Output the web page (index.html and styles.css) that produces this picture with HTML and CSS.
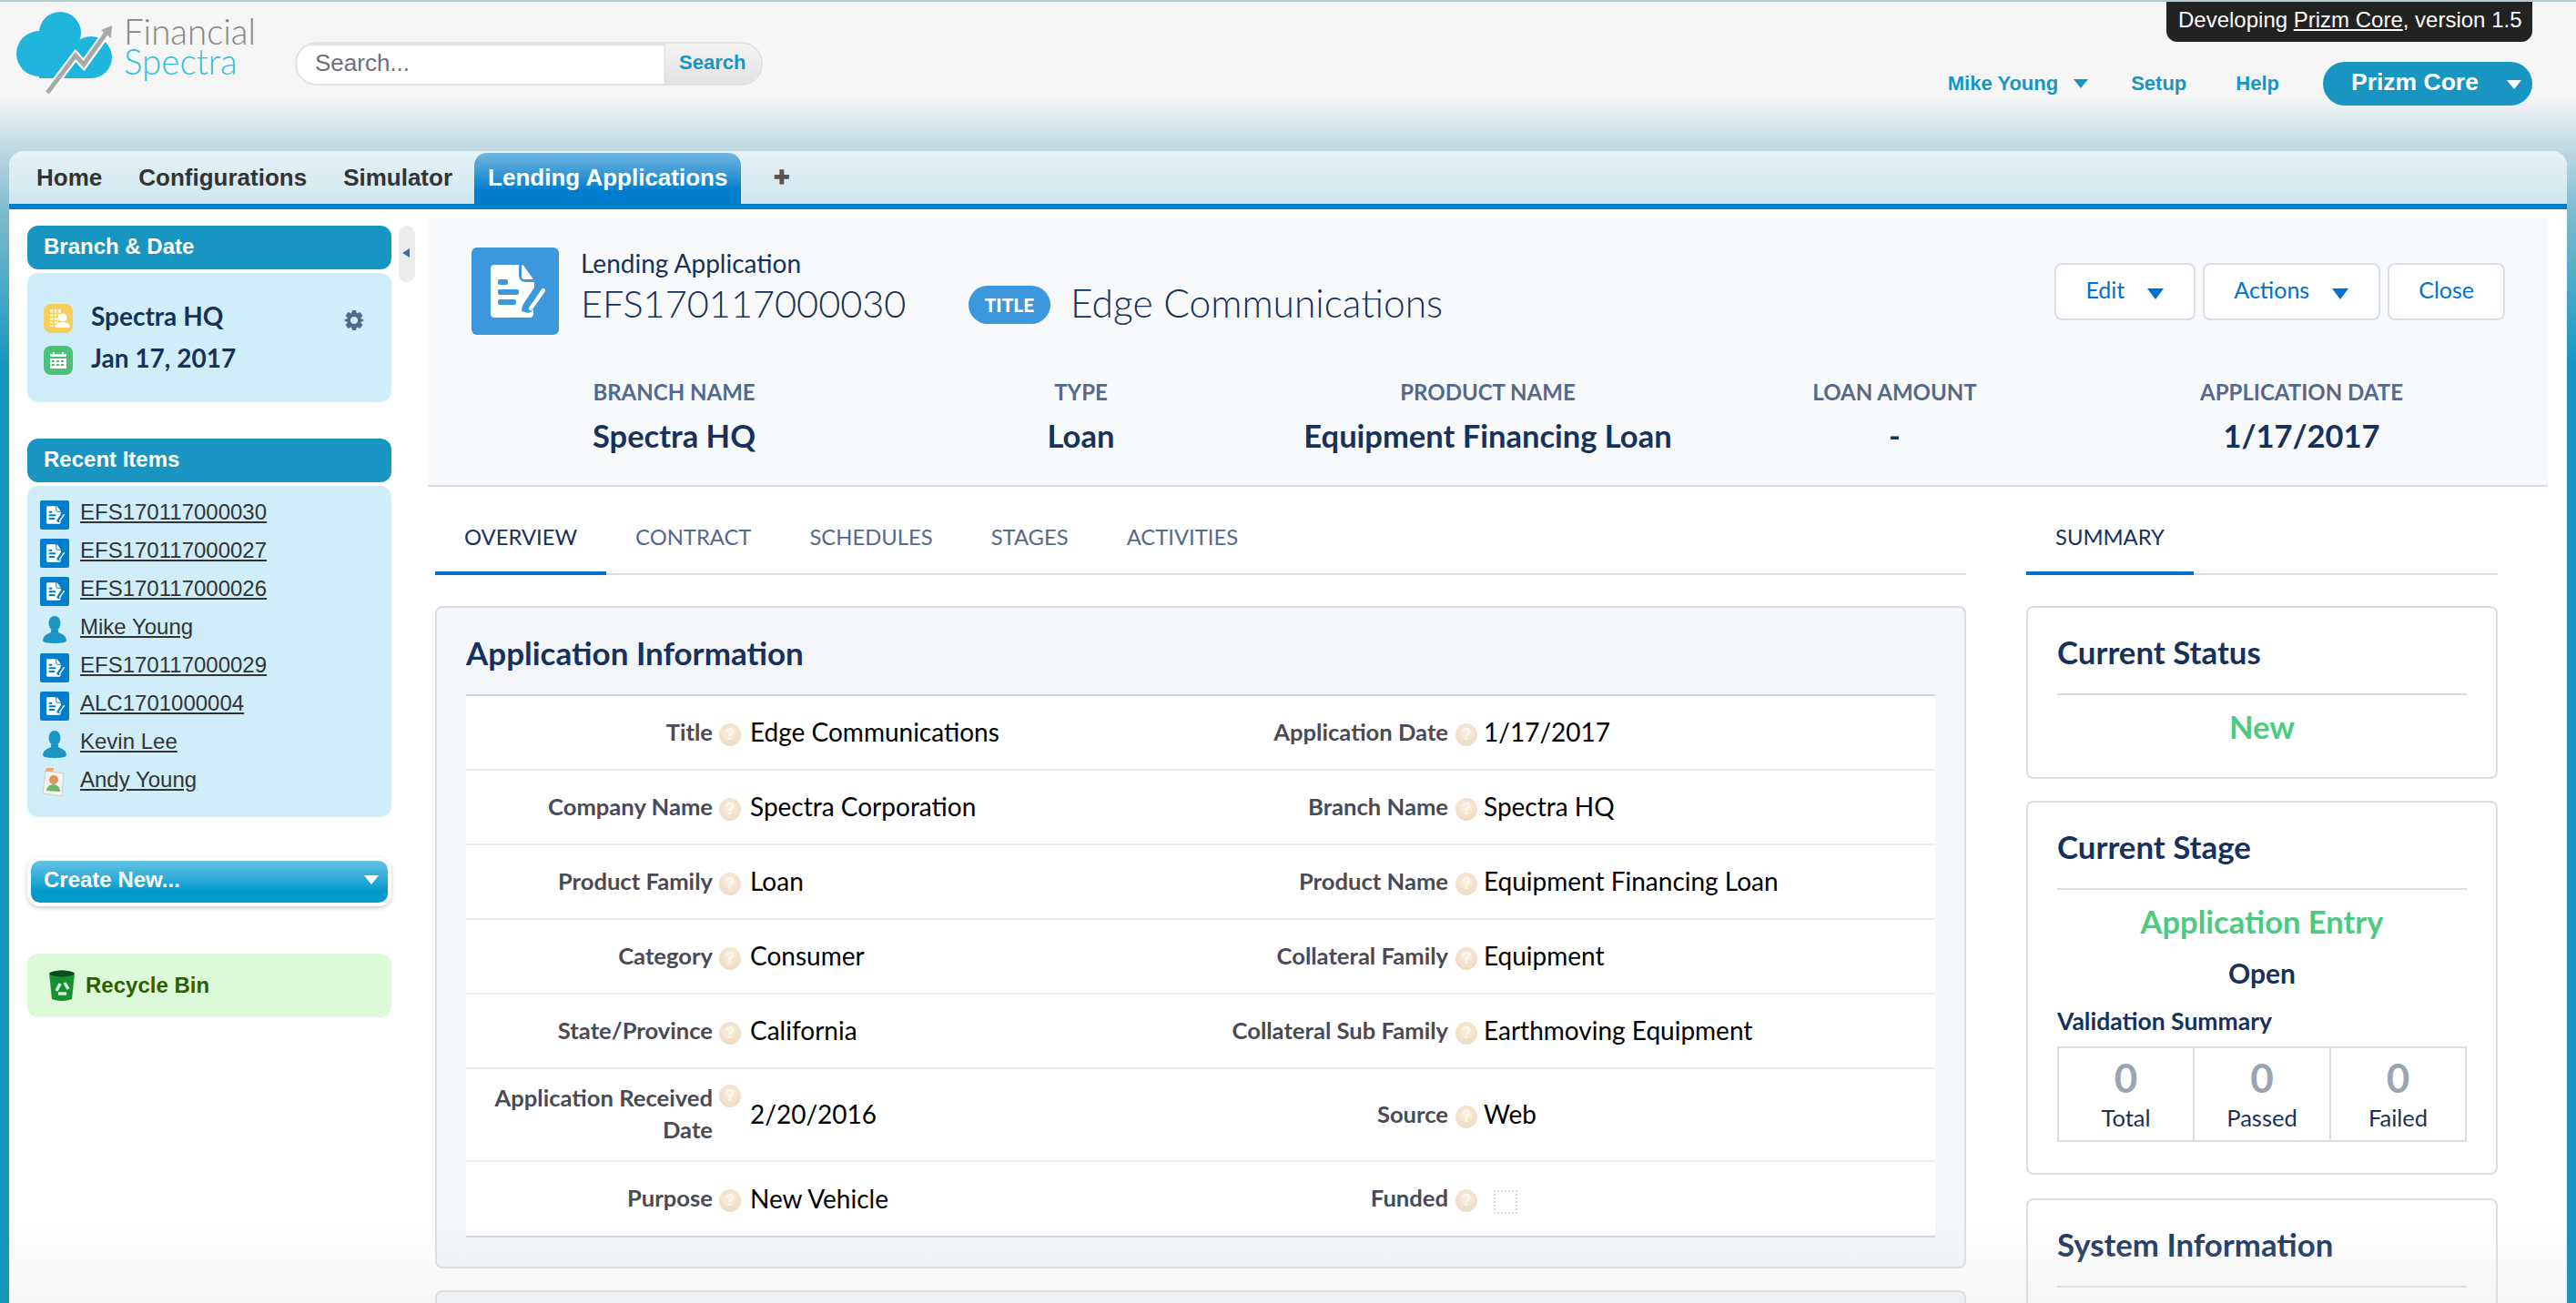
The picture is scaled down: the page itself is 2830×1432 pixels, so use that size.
FILE: index.html
```html
<!DOCTYPE html>
<html lang="en">
<head>
    <meta charset="UTF-8">
    <title>Lending Application EFS170117000030</title>
    <link rel="stylesheet" href="styles.css">
</head>
<body>
    <svg class="sprites" width="0" height="0">
        <symbol id="doc-icon" viewBox="0 0 96 96">
            <path fill="#fff" d="M25 19H52V30Q52 38 60 38H69V44L57 62Q55 66 55 70L62 72Q66 71 68 68V73Q68 77 64 77H25Q21 77 21 73V23Q21 19 25 19Z"/>
            <path fill="#fff" d="M55 19Q57 19 58 21L68 35H58Q55 35 55 32Z"/>
            <path stroke="#fff" stroke-width="4.5" stroke-linecap="round" d="M79 47L65 67"/>
            <rect class="doc-line" x="29" y="35" width="11" height="6" rx="2"/>
            <rect class="doc-line" x="29" y="46" width="23" height="6" rx="2"/>
            <rect class="doc-line" x="29" y="57" width="20" height="6" rx="2"/>
        </symbol>
        <symbol id="person-icon" viewBox="0 0 32 32">
            <ellipse cx="16" cy="9" rx="6.5" ry="8" fill="#1b96c4"/>
            <path fill="#1b96c4" d="M12 16H20V19Q29 22 29 28Q29 31 16 31Q3 31 3 28Q3 22 12 19Z"/>
        </symbol>
    </svg>

    <div class="header">
        <div class="logo">
            <svg class="logo-mark" width="125" height="106" viewBox="0 0 125 106">
                <circle cx="43" cy="59" r="25" fill="#1fb5dc"/>
                <circle cx="66" cy="36" r="23" fill="#1fb5dc"/>
                <circle cx="100" cy="63" r="23" fill="#1fb5dc"/>
                <rect x="43" y="50" width="57" height="36" fill="#1fb5dc"/>
                <path d="M52 102L83 61L92 71L121 31" fill="none" stroke="#fff" stroke-width="9"/>
                <path d="M52 102L83 61L92 71L119 33" fill="none" stroke="#aaa" stroke-width="5"/>
                <path d="M111 33L123 28L122 42Z" fill="#aaa"/>
            </svg>
            <div class="logo-text">
                <div class="logo-top">Financial</div>
                <div class="logo-bottom">Spectra</div>
            </div>
        </div>
        <div class="search">
            <div class="search-input">Search...</div>
            <div class="search-btn">Search</div>
        </div>
        <div class="top-links">
            <a class="top-link">Mike Young<i class="tri tri-teal"></i></a>
            <a class="top-link">Setup</a>
            <a class="top-link">Help</a>
            <div class="app-switch">Prizm Core<i class="tri tri-white"></i></div>
        </div>
        <div class="dev-note">Developing <u>Prizm Core</u>, version 1.5</div>
    </div>

    <div class="app">
        <div class="tab-bar">
            <a class="tab">Home</a>
            <a class="tab">Configurations</a>
            <a class="tab">Simulator</a>
            <a class="tab tab-active">Lending Applications</a>
            <a class="tab tab-plus">&#10010;</a>
        </div>

        <div class="workspace">
            <div class="sidebar">
                <div class="side-head">Branch &amp; Date</div>
                <div class="side-body branch-body">
                    <div class="branch-row">
                        <span class="branch-icon bg-yellow">
                            <svg width="32" height="32" viewBox="0 0 32 32">
                                <path fill="#fff" opacity=".85" d="M7 6H19V14Q15 17 15 25H7Z"/>
                                <path stroke="#f4cf5c" stroke-width="1.500" d="M7 10.500H19M7 14.500H16M7 18.500H15M7 22.500H15M11 6V25M15 6V14"/>
                                <circle cx="21" cy="15" r="4.5" fill="#fff"/>
                                <path fill="#fff" d="M13 26Q13 20 21 20Q29 20 29 26Z"/>
                            </svg>
                        </span>
                        <span class="branch-text">Spectra HQ</span>
                        <svg class="gear" width="24" height="24" viewBox="0 0 24 24">
                            <path fill="#54698d" d="M10 1H14L15 4.500L18.500 3L21.500 7L19 9.500L23 12L19 14.500L21.500 17L18.500 21L15 19.500L14 23H10L9 19.500L5.500 21L2.500 17L5 14.500L1 12L5 9.500L2.500 7L5.500 3L9 4.500Z"/>
                            <circle cx="12" cy="12" r="4" fill="#d0eef9"/>
                        </svg>
                    </div>
                    <div class="branch-row">
                        <span class="branch-icon bg-green">
                            <svg width="32" height="32" viewBox="0 0 32 32">
                                <path fill="#fff" d="M7 9H10V7H12V9H20V7H22V9H25V12H7ZM7 14H25V25H7Z"/>
                                <path stroke="#4bc076" stroke-width="2" stroke-dasharray="3 2" d="M9 17H24M9 21H24"/>
                            </svg>
                        </span>
                        <span class="branch-text">Jan 17, 2017</span>
                    </div>
                </div>

                <div class="side-head recent-head">Recent Items</div>
                <div class="side-body recent-body">
                    <a class="recent-row"><span class="doc-small"><svg width="32" height="32"><use href="#doc-icon"/></svg></span>EFS170117000030</a>
                    <a class="recent-row"><span class="doc-small"><svg width="32" height="32"><use href="#doc-icon"/></svg></span>EFS170117000027</a>
                    <a class="recent-row"><span class="doc-small"><svg width="32" height="32"><use href="#doc-icon"/></svg></span>EFS170117000026</a>
                    <a class="recent-row"><span class="doc-plain"><svg width="32" height="32"><use href="#person-icon"/></svg></span>Mike Young</a>
                    <a class="recent-row"><span class="doc-small"><svg width="32" height="32"><use href="#doc-icon"/></svg></span>EFS170117000029</a>
                    <a class="recent-row"><span class="doc-small"><svg width="32" height="32"><use href="#doc-icon"/></svg></span>ALC1701000004</a>
                    <a class="recent-row"><span class="doc-plain"><svg width="32" height="32"><use href="#person-icon"/></svg></span>Kevin Lee</a>
                    <a class="recent-row"><span class="doc-plain">
                        <svg width="32" height="32" viewBox="0 0 32 32">
                            <path fill="#f2f2ee" stroke="#cfcfc8" d="M6 3L26 6L24 31L3 28Z"/>
                            <path fill="#f2a65a" d="M7 0H15L14 4H6Z"/>
                            <circle cx="15" cy="13" r="5" fill="#e0955a"/>
                            <path fill="#6fb36a" d="M7 25Q8 18 15 18Q22 19 22 26Z"/>
                        </svg>
                    </span>Andy Young</a>
                </div>

                <div class="create-new">Create New...<i class="tri tri-white"></i></div>

                <div class="recycle">
                    <svg width="32" height="36" viewBox="0 0 32 36">
                        <path fill="#17912f" d="M2 4Q16 -1 30 4L27 33Q16 37 5 33Z"/>
                        <ellipse cx="16" cy="5" rx="13" ry="3.500" fill="#0b4d18"/>
                        <path fill="none" stroke="#d8ecd8" stroke-width="3.500" d="M10 24L14 16M19 15L23 22M21 27H12"/>
                    </svg>
                    <span>Recycle Bin</span>
                </div>
            </div>

            <div class="side-handle"><i class="handle-tri"></i></div>

            <div class="content">
                <div class="record-head">
                    <div class="record-top">
                        <span class="record-icon"><svg width="96" height="96"><use href="#doc-icon"/></svg></span>
                        <div class="record-name">
                            <div class="record-type">Lending Application</div>
                            <div class="record-id">EFS170117000030</div>
                        </div>
                        <span class="title-badge">TITLE</span>
                        <span class="record-title">Edge Communications</span>
                        <div class="record-actions">
                            <a class="action-btn">Edit<i class="tri tri-blue"></i></a>
                            <a class="action-btn">Actions<i class="tri tri-blue"></i></a>
                            <a class="action-btn">Close</a>
                        </div>
                    </div>
                    <div class="highlights">
                        <div><div class="hl-label">BRANCH NAME</div><div class="hl-value">Spectra HQ</div></div>
                        <div><div class="hl-label">TYPE</div><div class="hl-value">Loan</div></div>
                        <div><div class="hl-label">PRODUCT NAME</div><div class="hl-value">Equipment Financing Loan</div></div>
                        <div><div class="hl-label">LOAN AMOUNT</div><div class="hl-value">-</div></div>
                        <div><div class="hl-label">APPLICATION DATE</div><div class="hl-value">1/17/2017</div></div>
                    </div>
                </div>

                <div class="columns">
                    <div class="col-main">
                        <div class="sub-tabs">
                            <a class="sub-tab sub-tab-active">OVERVIEW</a>
                            <a class="sub-tab">CONTRACT</a>
                            <a class="sub-tab">SCHEDULES</a>
                            <a class="sub-tab">STAGES</a>
                            <a class="sub-tab">ACTIVITIES</a>
                        </div>

                        <div class="info-card">
                            <h2 class="card-title">Application Information</h2>
                            <div class="info-table">
                                <div class="info-row">
                                    <div class="field"><span class="f-label">Title</span><span class="help">?</span><span class="f-value">Edge Communications</span></div>
                                    <div class="field field-r"><span class="f-label">Application Date</span><span class="help">?</span><span class="f-value">1/17/2017</span></div>
                                </div>
                                <div class="info-row">
                                    <div class="field"><span class="f-label">Company Name</span><span class="help">?</span><span class="f-value">Spectra Corporation</span></div>
                                    <div class="field field-r"><span class="f-label">Branch Name</span><span class="help">?</span><span class="f-value">Spectra HQ</span></div>
                                </div>
                                <div class="info-row">
                                    <div class="field"><span class="f-label">Product Family</span><span class="help">?</span><span class="f-value">Loan</span></div>
                                    <div class="field field-r"><span class="f-label">Product Name</span><span class="help">?</span><span class="f-value">Equipment Financing Loan</span></div>
                                </div>
                                <div class="info-row">
                                    <div class="field"><span class="f-label">Category</span><span class="help">?</span><span class="f-value">Consumer</span></div>
                                    <div class="field field-r"><span class="f-label">Collateral Family</span><span class="help">?</span><span class="f-value">Equipment</span></div>
                                </div>
                                <div class="info-row">
                                    <div class="field"><span class="f-label">State/Province</span><span class="help">?</span><span class="f-value">California</span></div>
                                    <div class="field field-r"><span class="f-label">Collateral Sub Family</span><span class="help">?</span><span class="f-value">Earthmoving Equipment</span></div>
                                </div>
                                <div class="info-row info-row-tall">
                                    <div class="field"><span class="f-label">Application Received Date</span><span class="help help-top">?</span><span class="f-value">2/20/2016</span></div>
                                    <div class="field field-r"><span class="f-label">Source</span><span class="help">?</span><span class="f-value">Web</span></div>
                                </div>
                                <div class="info-row info-row-last">
                                    <div class="field"><span class="f-label">Purpose</span><span class="help">?</span><span class="f-value">New Vehicle</span></div>
                                    <div class="field field-r"><span class="f-label">Funded</span><span class="help">?</span><span class="check"></span></div>
                                </div>
                            </div>
                        </div>
                        <div class="info-card next-card"></div>
                    </div>

                    <div class="col-side">
                        <div class="sub-tabs">
                            <a class="sub-tab sub-tab-active">SUMMARY</a>
                        </div>

                        <div class="sum-card status-card">
                            <h3 class="sum-title">Current Status</h3>
                            <div class="sum-state">New</div>
                        </div>
                        <div class="sum-card stage-card">
                            <h3 class="sum-title">Current Stage</h3>
                            <div class="sum-state">Application Entry</div>
                            <div class="stage-open">Open</div>
                            <div class="valid-title">Validation Summary</div>
                            <div class="valid-grid">
                                <div class="valid-cell"><div class="valid-num">0</div><div class="valid-label">Total</div></div>
                                <div class="valid-cell"><div class="valid-num">0</div><div class="valid-label">Passed</div></div>
                                <div class="valid-cell"><div class="valid-num">0</div><div class="valid-label">Failed</div></div>
                            </div>
                        </div>
                        <div class="sum-card system-card">
                            <h3 class="sum-title">System Information</h3>
                        </div>
                    </div>
                </div>
            </div>
        </div>
    </div>
    <div class="bottom-fade"></div>
</body>
</html>
```

FILE: styles.css
```css
/* Page */
* {
    box-sizing: border-box;
}

html, body {
    height: 100%;
    overflow: hidden;
}

body {
    margin: 0;
    position: relative;
    font-family: "Liberation Sans", Arial, sans-serif;
    border-top: 2px solid #b7c9d1;
    background: linear-gradient(#f6f6f6 0, #f6f6f6 105px, #bcd8e2 166px, #7fbcd0 230px, #1896c1 400px);
}

.sprites {
    position: absolute;
}

.doc-line {
    fill: currentColor;
}

/* Triangles */
.tri {
    display: inline-block;
    width: 0;
    height: 0;
    border-left: 8px solid transparent;
    border-right: 8px solid transparent;
    border-top: 10px solid #fff;
}

.tri-teal {
    border-top-color: #1896c1;
    margin-left: 17px;
    vertical-align: 2px;
}

.tri-white {
    border-top-color: #fff;
}

.tri-blue {
    border-left-width: 9px;
    border-right-width: 9px;
    border-top: 12px solid #0070d2;
    margin: 0 1px 0 25px;
    vertical-align: -1px;
}

/* Header */
.header {
    height: 164px;
    display: flex;
    align-items: flex-start;
    position: relative;
}

.logo {
    display: flex;
    margin-top: -2px;
    width: 324px;
}

.logo-mark {
    flex: none;
    margin-right: 11px;
}

.logo-text {
    font-family: Lato, sans-serif;
    font-weight: 300;
    font-size: 38.500px;
    line-height: 33px;
    padding-top: 18px;
}

.logo-top {
    color: #858585;
}

.logo-bottom {
    color: #2fc0e2;
}

.search {
    display: flex;
    width: 514px;
    height: 48px;
    margin-top: 44px;
    border: 2px solid #e2e2e2;
    border-radius: 24px;
    overflow: hidden;
    background: #fff;
}

.search-input {
    flex: 1;
    padding-left: 20px;
    font-size: 26px;
    line-height: 42px;
    color: #6f6f75;
    box-shadow: inset 0 2px 2px #ddd;
}

.search-btn {
    width: 106px;
    padding-left: 15px;
    font-size: 22px;
    font-weight: bold;
    line-height: 42px;
    color: #1896c1;
    background: linear-gradient(#f4f4f4, #e2e2e2);
    border-left: 1px solid #ddd;
}

.top-links {
    margin: 66px 48px 0 auto;
    display: flex;
    align-items: center;
    height: 48px;
}

.top-link {
    font-size: 22px;
    font-weight: bold;
    color: #1896c1;
    margin-right: 54px;
}

.top-link:nth-child(2) {
    margin-left: -7px;
}

.app-switch {
    width: 230px;
    height: 48px;
    margin-left: -6px;
    padding-left: 31px;
    border-radius: 24px;
    background: #1896c1;
    color: #fff;
    font-size: 26.500px;
    font-weight: bold;
    line-height: 44px;
}

.app-switch .tri {
    margin-left: 31px;
    vertical-align: 1px;
}

.dev-note {
    position: absolute;
    top: 0;
    right: 48px;
    width: 402px;
    height: 44px;
    padding-left: 13px;
    background: #222;
    color: #fff;
    font-size: 24px;
    line-height: 40px;
    white-space: nowrap;
    border-radius: 0 0 12px 12px;
}

/* App shell */
.app {
    margin: 0 10px;
    height: calc(100vh - 166px);
    overflow: hidden;
    background: #fff;
    border-radius: 16px 16px 0 0;
}

.tab-bar {
    height: 64px;
    display: flex;
    padding: 2px 0 0 21px;
    border-bottom: 6px solid #007dcd;
    border-radius: 16px 16px 0 0;
    background: linear-gradient(#e6f2f6, #cfe7ef);
}

.tab {
    padding: 0 9px;
    margin-right: 22px;
    font-size: 26px;
    font-weight: bold;
    line-height: 54px;
    color: #333;
}

.tab-active {
    width: 293px;
    margin: 0 0 0 -7px;
    padding: 0 15px;
    color: #fff;
    white-space: nowrap;
    border-radius: 14px 14px 0 0;
    background: linear-gradient(#74b7e0, #007dcd 75%);
}

.tab-plus {
    margin: 0 0 0 27px;
    font-size: 21px;
    color: #555;
}

.workspace {
    display: flex;
}

/* Sidebar */
.sidebar {
    width: 400px;
    flex: none;
    margin: 18px 0 0 20px;
}

.side-head {
    height: 48px;
    padding-left: 18px;
    border-radius: 12px;
    background: #1896c1;
    color: #fff;
    font-size: 24px;
    font-weight: bold;
    line-height: 46px;
}

.side-body {
    margin-top: 4px;
    border-radius: 12px;
    background: #d0eef9;
}

.branch-body {
    height: 142px;
    padding: 34px 0 0 18px;
}

.branch-row {
    display: flex;
    align-items: center;
    height: 32px;
    margin-bottom: 14px;
}

.branch-icon {
    width: 32px;
    height: 32px;
    border-radius: 8px;
}

.bg-yellow {
    background: #f4cf5c;
}

.bg-green {
    background: #4bc076;
}

.branch-text {
    margin-left: 20px;
    font-family: Lato, sans-serif;
    font-size: 28px;
    font-weight: 700;
    color: #16325c;
    margin-top: -7px;
}

.gear {
    margin-left: auto;
    margin-right: 29px;
    margin-top: 3px;
}

.recent-head {
    margin-top: 40px;
}

.recent-body {
    height: 364px;
    padding: 16px 0 0 14px;
}

.recent-row {
    display: flex;
    align-items: flex-start;
    height: 42px;
    font-size: 24px;
    line-height: 26px;
    color: #333;
    text-decoration: underline;
}

.doc-small, .doc-plain {
    flex: none;
    width: 32px;
    height: 32px;
    margin-right: 12px;
    text-decoration: none;
}

.doc-small {
    background: #007dcd;
    color: #007dcd;
    border-radius: 2px;
}

.create-new {
    display: flex;
    align-items: center;
    justify-content: space-between;
    height: 46px;
    margin: 48px 4px 0;
    padding: 0 10px 4px 14px;
    border-radius: 10px;
    background: linear-gradient(#66c3e4, #0299cb 75%);
    color: #fff;
    font-size: 24px;
    font-weight: bold;
    box-shadow: 0 0 0 4px #fff, 0 2px 5px 4px #ccc;
}

.recycle {
    display: flex;
    align-items: center;
    height: 70px;
    margin-top: 56px;
    padding-left: 22px;
    border-radius: 12px;
    background: #dcf9da;
    color: #2b6000;
    font-size: 24px;
    font-weight: bold;
}

.recycle span {
    margin-left: 10px;
}

.side-handle {
    flex: none;
    display: flex;
    align-items: center;
    width: 18px;
    height: 62px;
    margin: 18px 14px 0 8px;
    border-radius: 9px;
    background: #ececec;
    padding-left: 4px;
}

.handle-tri {
    border-top: 5px solid transparent;
    border-bottom: 5px solid transparent;
    border-right: 8px solid #3a6cb0;
    margin-bottom: 2px;
}

/* Record header */
.content {
    width: 2329px;
    margin-top: 10px;
}

.record-head {
    height: 295px;
    padding: 32px 47px 0 48px;
    background: #f7f9fb;
    border-bottom: 2px solid #d8dde6;
}

.record-top {
    display: flex;
    align-items: center;
    height: 96px;
    color: #16325c;
}

.record-icon {
    width: 96px;
    height: 96px;
    border-radius: 6px;
    background: #3c97dd;
    color: #3c97dd;
}

.record-name {
    margin: -8px 0 0 24px;
    width: 426px;
}

.record-type {
    font-family: Lato, sans-serif;
    font-size: 28px;
    line-height: 34px;
}

.record-id {
    font-family: Lato, sans-serif;
    font-weight: 300;
    font-size: 41.500px;
    line-height: 54px;
    white-space: nowrap;
}

.title-badge {
    margin-top: 30px;
    width: 90px;
    height: 42px;
    border-radius: 21px;
    background: #3c97dd;
    color: #fff;
    font-family: Lato, sans-serif;
    font-size: 21px;
    font-weight: 900;
    line-height: 42px;
    text-align: center;
}

.record-title {
    margin: 24px 0 0 22px;
    font-family: Lato, sans-serif;
    font-weight: 300;
    font-size: 42.500px;
}

.record-actions {
    margin-left: auto;
    display: flex;
    gap: 8px;
}

.action-btn {
    height: 63px;
    padding: 0 32px;
    border: 2px solid #d8dde6;
    border-radius: 8px;
    background: #fff;
    color: #0070d2;
    font-family: Lato, sans-serif;
    font-size: 25px;
    line-height: 55px;
}

.highlights {
    display: grid;
    grid-template-columns: repeat(5, 447px);
    margin: 48px 0 0 -1px;
    text-align: center;
}

.hl-label {
    font-family: Lato, sans-serif;
    font-size: 24px;
    font-weight: 700;
    line-height: 30px;
    color: #54698d;
}

.hl-value {
    margin-top: 13px;
    font-family: Lato, sans-serif;
    font-size: 34.500px;
    font-weight: 700;
    line-height: 40px;
    color: #16325c;
}

/* Tabs under the header */
.columns {
    display: flex;
}

.col-main {
    width: 1682px;
    margin-left: 8px;
}

.col-side {
    width: 518px;
    margin-left: 66px;
}

.sub-tabs {
    display: flex;
    height: 97px;
    border-bottom: 2px solid #d8dde6;
}

.sub-tab {
    height: 95px;
    padding: 38px 32px 0;
    font-family: Lato, sans-serif;
    font-size: 23.800px;
    line-height: 34px;
    color: #54698d;
}

.sub-tab-active {
    color: #16325c;
    border-bottom: 4px solid #0070d2;
    height: 97px;
}

/* Application Information */
.info-card {
    height: 728px;
    margin-top: 34px;
    border: 2px solid #d8dde6;
    border-radius: 8px;
    background: #f4f6f9;
}

.next-card {
    margin-top: 24px;
}

.card-title {
    margin: 0;
    height: 95px;
    padding: 29px 0 0 32px;
    font-family: Lato, sans-serif;
    font-size: 35px;
    font-weight: 700;
    line-height: 40px;
    color: #16325c;
}

.info-table {
    margin: 0 32px;
    background: #fff;
    border-top: 2px solid #ccd6e3;
    border-bottom: 2px solid #ccd6e3;
}

.info-row {
    display: grid;
    grid-template-columns: 806px 1fr;
    align-items: center;
    height: 82px;
    border-bottom: 2px solid #eee;
}

.info-row-tall {
    height: 102px;
}

.info-row-last {
    border-bottom: 0;
    height: 81px;
}

.field {
    display: flex;
    align-items: center;
    margin-top: -2px;
}

.f-label {
    flex: none;
    width: 271px;
    font-family: Lato, sans-serif;
    font-size: 25.600px;
    font-weight: 700;
    line-height: 35px;
    text-align: right;
    color: #4a4a56;
}

.field-r .f-label {
    width: 273px;
}

.help {
    flex: none;
    width: 24px;
    height: 25px;
    margin: 6px 10px 0 7px;
    border-radius: 50%;
    background: radial-gradient(circle at 50% 40%, #fbf1e2, #ead3b6);
    color: #fdf8f0;
    font-size: 18px;
    font-weight: bold;
    line-height: 25px;
    text-align: center;
}

.field-r .help {
    margin: 6px 7px 0 8px;
}

.help-top {
    align-self: flex-start;
    margin-top: 3px;
}

.f-value {
    font-family: Lato, sans-serif;
    font-size: 28px;
    color: #000;
}

.check {
    width: 26px;
    height: 26px;
    margin: 8px 0 0 11px;
    border: 2px dotted #ddd;
}

/* Summary cards */
.sum-card {
    margin-top: 24px;
    padding: 0 32px;
    border: 2px solid #d8dde6;
    border-radius: 8px;
    background: #fff;
    color: #16325c;
}

.status-card {
    height: 190px;
    margin-top: 34px;
}

.stage-card {
    height: 411px;
}

.system-card {
    height: 300px;
    margin-top: 26px;
}

.sum-title {
    margin: 0;
    height: 96px;
    padding-top: 29px;
    font-family: Lato, sans-serif;
    font-size: 34.800px;
    font-weight: 700;
    line-height: 40px;
    border-bottom: 2px solid #d8dde6;
}

.sum-state {
    margin-top: 15px;
    font-family: Lato, sans-serif;
    font-size: 34.500px;
    font-weight: 700;
    line-height: 40px;
    text-align: center;
    color: #4bca81;
}

.stage-open {
    margin-top: 16px;
    font-family: Lato, sans-serif;
    font-size: 30px;
    font-weight: 700;
    line-height: 40px;
    text-align: center;
}

.valid-title {
    margin-top: 17px;
    font-family: Lato, sans-serif;
    font-size: 26.500px;
    font-weight: 700;
    line-height: 32px;
}

.valid-grid {
    display: grid;
    grid-template-columns: 147px 150px 1fr;
    height: 105px;
    margin-top: 12px;
    border: 2px solid #d8dde6;
    text-align: center;
}

.valid-cell + .valid-cell {
    border-left: 2px solid #d8dde6;
}

.valid-num {
    font-family: Lato, sans-serif;
    font-size: 44px;
    font-weight: 700;
    line-height: 50px;
    margin-top: 7px;
    color: #9aa5b3;
}

.valid-label {
    margin-top: 3px;
    font-family: Lato, sans-serif;
    font-size: 25.500px;
    line-height: 32px;
}

/* Soft fade along the bottom of the window */
.bottom-fade {
    position: absolute;
    left: 10px;
    right: 10px;
    bottom: 0;
    height: 90px;
    background: linear-gradient(rgba(225, 225, 225, 0), rgba(225, 225, 225, .3));
    pointer-events: none;
}
```
